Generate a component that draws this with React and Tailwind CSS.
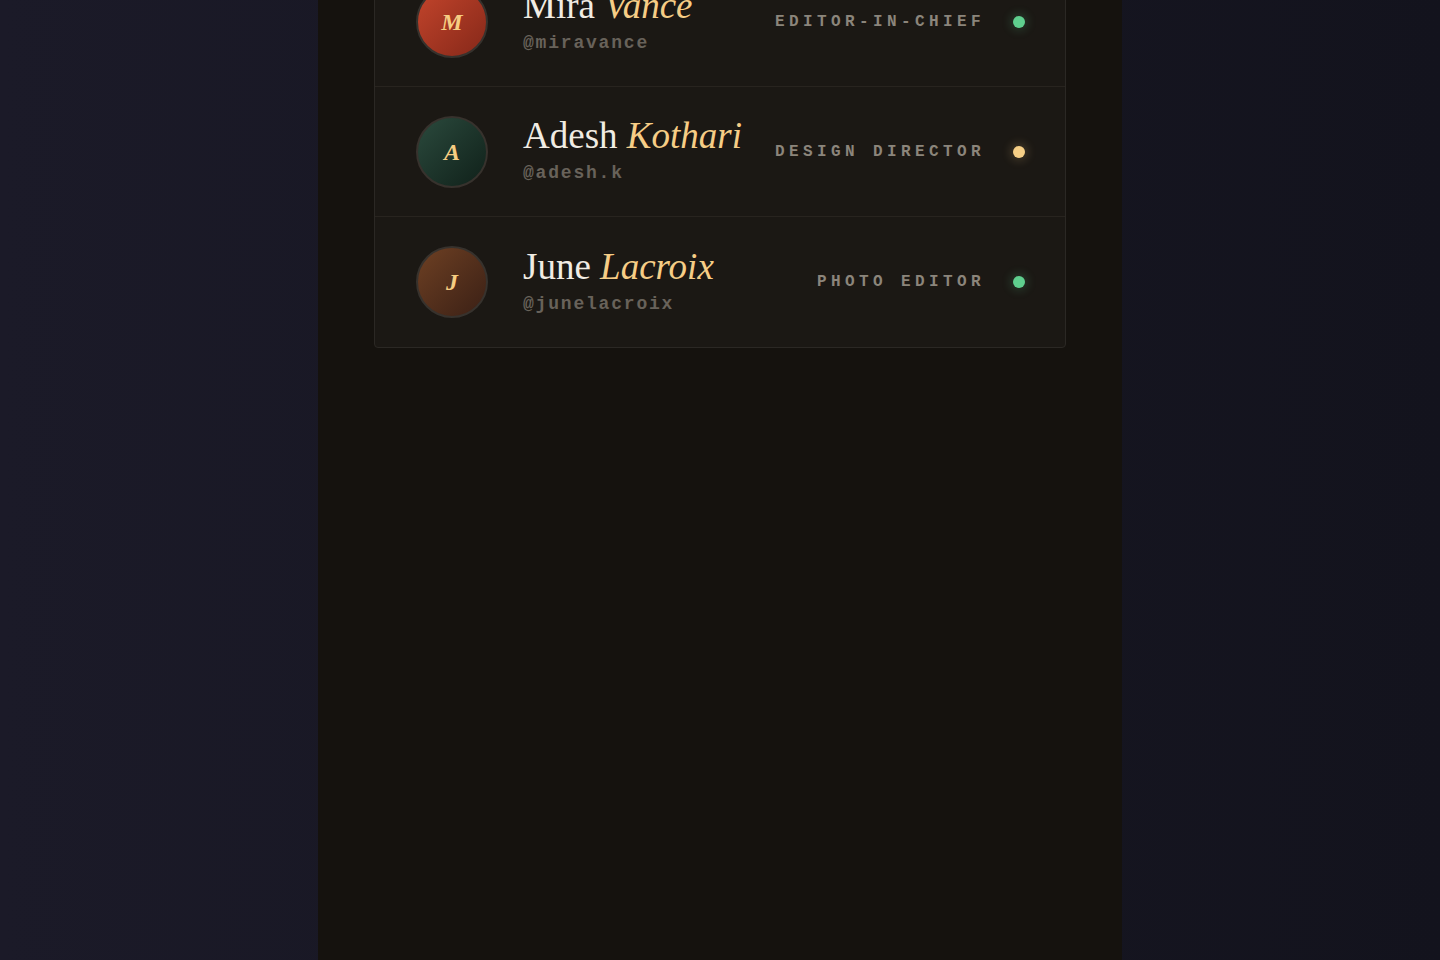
import React from 'react';

const people = [
  {
    initial: 'M',
    first: 'Mira',
    last: 'Vance',
    handle: '@miravance',
    role: 'EDITOR-IN-CHIEF',
    avatar: 'bg-gradient-to-br from-[#c4452c] to-[#862819]',
    dot: 'bg-[#5fcf8e] shadow-[0_0_10px_3px_rgba(95,207,142,0.18)]',
  },
  {
    initial: 'A',
    first: 'Adesh',
    last: 'Kothari',
    handle: '@adesh.k',
    role: 'DESIGN DIRECTOR',
    avatar: 'bg-gradient-to-br from-[#2b4a3d] to-[#10211a]',
    dot: 'bg-[#f6cf86] shadow-[0_0_10px_3px_rgba(246,207,134,0.18)]',
  },
  {
    initial: 'J',
    first: 'June',
    last: 'Lacroix',
    handle: '@junelacroix',
    role: 'PHOTO EDITOR',
    avatar: 'bg-gradient-to-br from-[#6e4023] to-[#3b2015]',
    dot: 'bg-[#5fcf8e] shadow-[0_0_10px_3px_rgba(95,207,142,0.18)]',
  },
];

const serif = 'font-["Georgia","Liberation_Serif","DejaVu_Serif",serif]';
const mono = 'font-["Courier_New","Nimbus_Mono_PS","FreeMono","Liberation_Mono",monospace]';

const MemberRow = ({ person, last }) => (
  <div
    className={`flex items-center gap-7 h-[130px] pl-[41px] pr-10 ${last ? '' : 'border-b border-[#28241f]'}`}
  >
    <div
      className={`w-[72px] h-[72px] shrink-0 rounded-full border-2 border-[#37322d] flex items-center justify-center ${person.avatar}`}
    >
      <span className={`${serif} italic font-bold text-[24px] text-[#f6cd82]`}>{person.initial}</span>
    </div>
    <div className="flex-1 min-w-0 ml-[7px] -mt-[2px]">
      <div className={`${serif} text-[37px] leading-[40px] text-[#f1ece3] whitespace-nowrap`}>
        {person.first} <span className="italic text-[#f6cd86]">{person.last}</span>
      </div>
      <div className={`${mono} text-[18px] leading-[24px] tracking-[0.1em] font-bold text-[#68625a] mt-[5px]`}>
        {person.handle}
      </div>
    </div>
    <div className={`${mono} text-[16px] font-bold tracking-[4.4px] text-[#8b857b] whitespace-nowrap`}>
      {person.role}
    </div>
    <span className={`w-3 h-3 rounded-full shrink-0 ${person.dot}`} />
  </div>
);

export default function App() {
  return (
    <div className="min-h-screen w-full bg-gradient-to-r from-[#1b1a28] to-[#13131d] flex justify-center">
      <div className="w-[804px] min-h-screen bg-[#15120e] px-14">
        <div className="-mt-[44px] border border-[#2b2824] rounded-[4px] bg-[#1b1814]">
          {people.map((p, i) => (
            <MemberRow key={p.handle} person={p} last={i === people.length - 1} />
          ))}
        </div>
      </div>
    </div>
  );
}
